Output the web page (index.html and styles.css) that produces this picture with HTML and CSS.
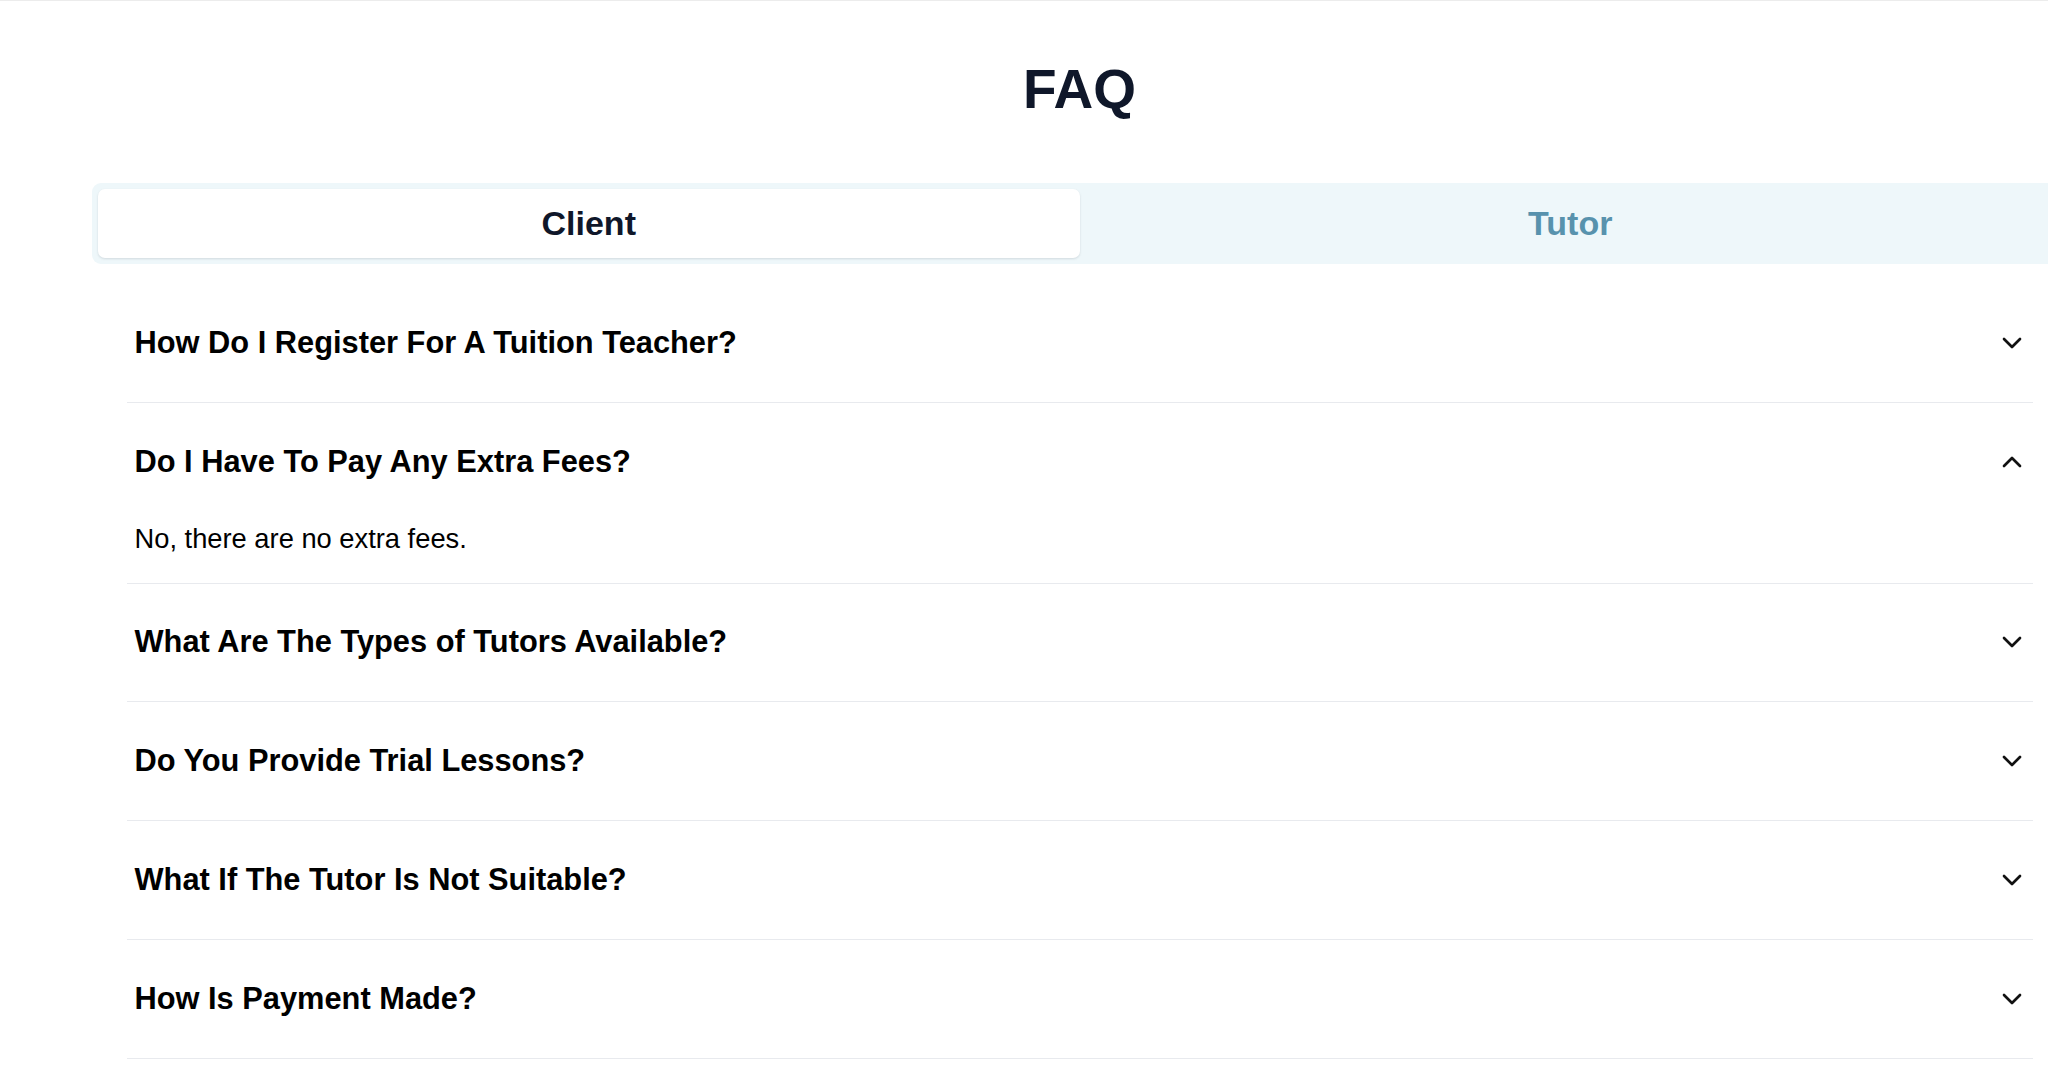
FILE: index.html
```html
<!DOCTYPE html>
<html lang="en">
<head>
<meta charset="utf-8">
<title>FAQ</title>
<link rel="stylesheet" href="styles.css">
</head>
<body>
<div class="topline"></div>
<main class="page">
  <h1 class="title">FAQ</h1>
  <div class="tabs">
    <button class="tab active">Client</button>
    <button class="tab">Tutor</button>
  </div>
  <div class="faq">
    <div class="item">
      <div class="q"><span>How Do I Register For A Tuition Teacher?</span>
        <svg class="chev" viewBox="0 0 24 24"><path d="M6 9l6 6 6-6"/></svg></div>
    </div>
    <div class="item">
      <div class="q"><span>Do I Have To Pay Any Extra Fees?</span>
        <svg class="chev" viewBox="0 0 24 24"><path d="M6 15l6-6 6 6"/></svg></div>
      <div class="a">No, there are no extra fees.</div>
    </div>
    <div class="item">
      <div class="q"><span>What Are The Types of Tutors Available?</span>
        <svg class="chev" viewBox="0 0 24 24"><path d="M6 9l6 6 6-6"/></svg></div>
    </div>
    <div class="item">
      <div class="q"><span>Do You Provide Trial Lessons?</span>
        <svg class="chev" viewBox="0 0 24 24"><path d="M6 9l6 6 6-6"/></svg></div>
    </div>
    <div class="item">
      <div class="q"><span>What If The Tutor Is Not Suitable?</span>
        <svg class="chev" viewBox="0 0 24 24"><path d="M6 9l6 6 6-6"/></svg></div>
    </div>
    <div class="item">
      <div class="q"><span>How Is Payment Made?</span>
        <svg class="chev" viewBox="0 0 24 24"><path d="M6 9l6 6 6-6"/></svg></div>
    </div>
  </div>
</main>
</body>
</html>
```
FILE: styles.css
```css
html, body {
  margin: 0;
  padding: 0;
  overflow-x: hidden;
  background: #ffffff;
  font-family: "Liberation Sans", Arial, sans-serif;
}

.topline {
  height: 1px;
  background: #ececec;
}

.page {
  margin-left: 92px;
  width: 1975px;
  padding-top: 61px;
}

.title {
  margin: 0;
  text-align: center;
  font-size: 55px;
  line-height: 55px;
  font-weight: 700;
  color: #0f172a;
}

.tabs {
  margin-top: 66px;
  display: grid;
  grid-template-columns: 1fr 1fr;
  padding: 6px;
  background: #eef7fa;
  border-radius: 9px;
}

.tab {
  height: 69px;
  border: 0;
  border-radius: 7px;
  background: transparent;
  font-family: "Liberation Sans", Arial, sans-serif;
  font-size: 34px;
  font-weight: 700;
  color: #5892ad;
  padding: 0;
}

.tab.active {
  background: #ffffff;
  color: #0f172a;
  box-shadow: 0 1px 3px rgba(15, 23, 42, 0.08), 0 1px 2px rgba(15, 23, 42, 0.05);
}

.faq {
  margin: 20px 34.5px 0;
}

.item {
  border-bottom: 1px solid #e8eaee;
}

.q {
  height: 117.8px;
  display: flex;
  align-items: center;
  justify-content: space-between;
  padding: 0 5px 0 8px;
  box-sizing: border-box;
  font-size: 30.8px;
  font-weight: 700;
  color: #000000;
}

.chev {
  width: 32px;
  height: 32px;
  fill: none;
  stroke: #111111;
  stroke-width: 2;
  stroke-linecap: round;
  stroke-linejoin: round;
}

.a {
  padding: 0 8px 26px;
  font-size: 27.3px;
  line-height: 36px;
  color: #000000;
}
```
